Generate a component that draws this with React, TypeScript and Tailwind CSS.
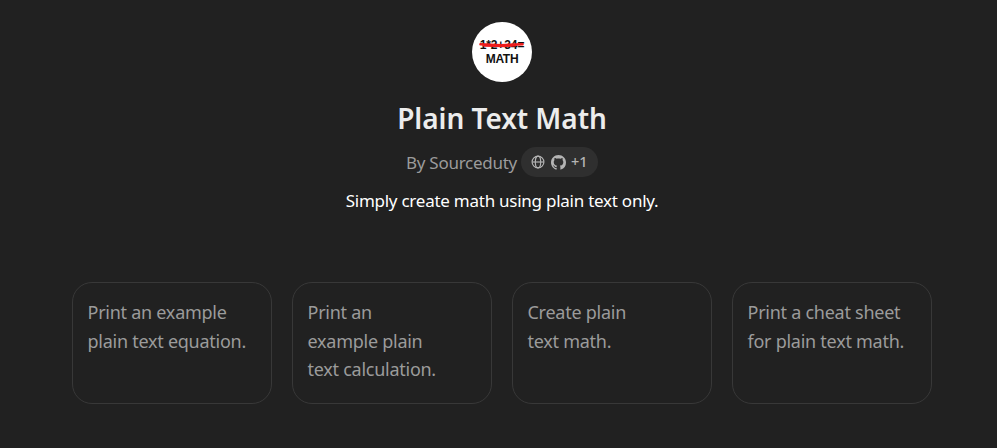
import React from "react";

const cards = [
  ["Print an example", "plain text equation."],
  ["Print an", "example plain", "text calculation."],
  ["Create plain", "text math."],
  ["Print a cheat sheet", "for plain text math."],
];

function Logo() {
  return (
    <div className="relative flex h-[60px] w-[60px] flex-col items-center rounded-full bg-white pt-[16px] font-['Liberation_Sans',sans-serif] text-[12px] font-bold leading-[14px] text-[#111]">
      <span className="tracking-[-0.1px]">1*2+34=</span>
      <span className="tracking-[-0.3px]">MATH</span>
      <svg className="absolute left-[7px] top-[19px]" width="46" height="9" viewBox="0 0 46 9" fill="none" stroke="#ee1c1c" strokeLinecap="round">
        <path d="M1.5 3.2 L22 4.2 L43.5 3.2" strokeWidth="2.6" />
        <path d="M5 4.6 L24 5 L36 4.4" strokeWidth="2.4" />
      </svg>
    </div>
  );
}

function Globe() {
  return (
    <svg width="14" height="14" viewBox="0 0 14 14" fill="none" stroke="#b4b4b4" strokeWidth="1.15">
      <circle cx="7" cy="7" r="5.9" />
      <ellipse cx="7" cy="7" rx="2.7" ry="5.9" />
      <path d="M1.1 7h11.8" />
    </svg>
  );
}

function GitHub() {
  return (
    <svg width="15" height="15" viewBox="0 0 16 16" fill="#b4b4b4">
      <path d="M8 0C3.58 0 0 3.58 0 8c0 3.54 2.29 6.53 5.47 7.59.4.07.55-.17.55-.38 0-.19-.01-.82-.01-1.49-2.01.37-2.53-.49-2.69-.94-.09-.23-.48-.94-.82-1.13-.28-.15-.68-.52-.01-.53.63-.01 1.08.58 1.23.82.72 1.21 1.87.87 2.33.66.07-.52.28-.87.51-1.07-1.78-.2-3.64-.89-3.64-3.95 0-.87.31-1.59.82-2.15-.08-.2-.36-1.02.08-2.12 0 0 .67-.21 2.2.82.64-.18 1.32-.27 2-.27s1.36.09 2 .27c1.53-1.04 2.2-.82 2.2-.82.44 1.1.16 1.92.08 2.12.51.56.82 1.27.82 2.15 0 3.07-1.87 3.75-3.65 3.95.29.25.54.73.54 1.48 0 1.07-.01 1.93-.01 2.2 0 .21.15.46.55.38A8.01 8.01 0 0 0 16 8c0-4.42-3.58-8-8-8z" />
    </svg>
  );
}

export default function App() {
  return (
    <main className="flex h-[448px] w-full flex-col items-center overflow-hidden bg-[#212121] pl-[7px] pt-[22px] font-['Noto_Sans',sans-serif]">
      <Logo />
      <h1 className="mt-[18px] h-[36px] text-[28px] font-semibold leading-[36px] tracking-[-0.05px] text-[#ececec]">Plain Text Math</h1>
      <div className="mt-[11px] flex h-[30px] items-center gap-1 text-[17px] tracking-[-0.26px] text-[#9b9b9b]">
        <span className="pt-[2px]">By Sourceduty</span>
        <div className="flex h-[30px] w-[77px] items-center rounded-full bg-[#2f2f2f] pl-[10px] text-[14.5px] font-medium tracking-normal text-[#b4b4b4]">
          <Globe />
          <span className="ml-[6px]"><GitHub /></span>
          <span className="ml-[5px]">+1</span>
        </div>
      </div>
      <p className="mt-[10px] h-[28px] text-[17px] leading-[28px] tracking-[-0.25px] text-white">Simply create math using plain text only.</p>
      <div className="mt-[67px] flex gap-5">
        {cards.map((lines) => (
          <div key={lines.join()} className="h-[122px] w-[200px] rounded-[20px] border border-[#383838] pl-[14.5px] pt-[15px] text-[18px] leading-[28.5px] tracking-[-0.26px] text-[#9b9b9b]">
            {lines.map((t) => <p key={t} className="whitespace-nowrap">{t}</p>)}
          </div>
        ))}
      </div>
    </main>
  );
}
